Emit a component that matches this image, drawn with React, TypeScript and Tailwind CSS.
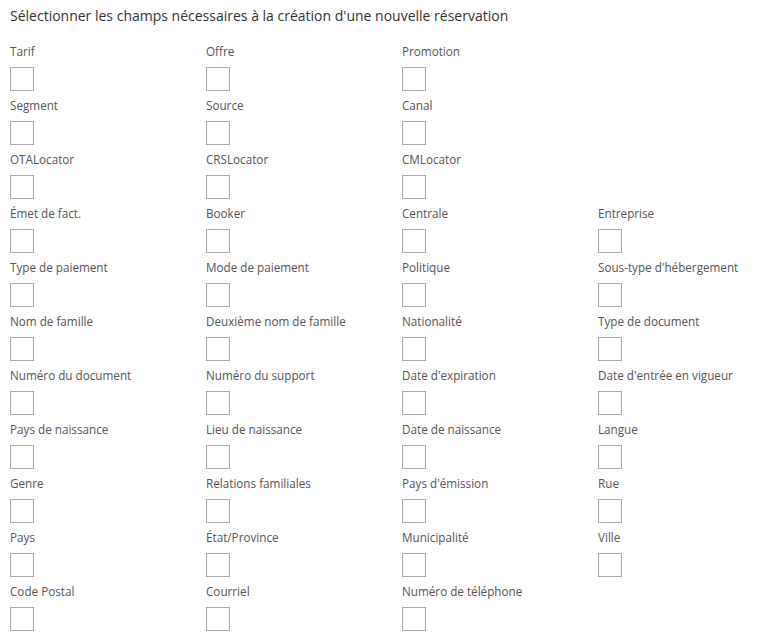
import React from "react";

const rows: (string | null)[][] = [
  ["Tarif", "Offre", "Promotion", null],
  ["Segment", "Source", "Canal", null],
  ["OTALocator", "CRSLocator", "CMLocator", null],
  ["Émet de fact.", "Booker", "Centrale", "Entreprise"],
  ["Type de paiement", "Mode de paiement", "Politique", "Sous-type d'hébergement"],
  ["Nom de famille", "Deuxième nom de famille", "Nationalité", "Type de document"],
  ["Numéro du document", "Numéro du support", "Date d'expiration", "Date d'entrée en vigueur"],
  ["Pays de naissance", "Lieu de naissance", "Date de naissance", "Langue"],
  ["Genre", "Relations familiales", "Pays d'émission", "Rue"],
  ["Pays", "État/Province", "Municipalité", "Ville"],
  ["Code Postal", "Courriel", "Numéro de téléphone", null],
];

function Field({ label }: { label: string }) {
  return (
    <div className="flex flex-col items-start pb-[6px]">
      <span className="text-[11.7px] leading-[17px] text-[#555]">{label}</span>
      <button
        type="button"
        className="mt-[7px] w-[24px] h-[24px] border border-[#aaa] bg-white"
        aria-label={label}
      />
    </div>
  );
}

export default function App() {
  return (
    <div
      className="bg-white min-h-screen px-[10px] pt-[6px]"
      style={{ fontFamily: '"Open Sans", sans-serif' }}
    >
      <h1 className="text-[14px] leading-[20px] text-[#333] font-normal mb-[17px]">
        Sélectionner les champs nécessaires à la création d'une nouvelle réservation
      </h1>
      <div className="grid grid-cols-[196px_196px_196px_196px]">
        {rows.flatMap((row, i) =>
          row.map((label, j) =>
            label ? <Field key={`${i}-${j}`} label={label} /> : <div key={`${i}-${j}`} />
          )
        )}
      </div>
    </div>
  );
}
